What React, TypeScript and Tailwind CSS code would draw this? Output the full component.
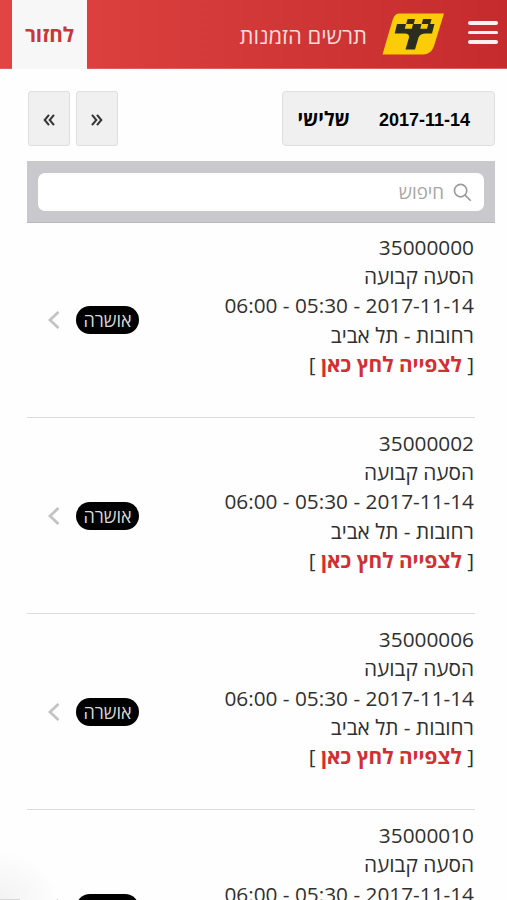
const orders = ['35000000', '35000002', '35000006', '35000010'];

function Logo() {
  return (
    <svg className="block h-[42px] w-[62px]" viewBox="0 0 62 42">
      <path d="M17 0.500H62L52 33Q49 41.500 41 41.500H0.500L10 9Q12 0.500 17 0.500Z" fill="#fdcc08" />
      <g fill="#2b2d1f">
        <path d="M25.500 6h7.500l-1.300 5h-7.500z" />
        <path d="M41 6H49.500l-1.300 5h-8.500z" />
        <path d="M15 11h9l-1.200 4.800h7l1.200-4.800h8.500l-1.200 4.800h6.700l1.200-4.800h6.300l-2.500 9.500H44Q38 20.500 36.500 24.500L33 36.500h-9.500L27 24.500Q27.500 20.500 22.500 20.500H12.700z" />
      </g>
    </svg>
  );
}

function Header() {
  return (
    <header className="flex h-[69px] items-start border-b border-[#d8605f] bg-linear-to-l from-[#c52b2c] to-[#e04443]">
      <button className="mr-[9px] mt-[21px] flex w-[30px] flex-col gap-[6px]">
        <span className="h-[3.500px] rounded-full bg-[#fff0f0]" />
        <span className="h-[3.500px] rounded-full bg-[#fff0f0]" />
        <span className="h-[3.500px] rounded-full bg-[#fff0f0]" />
      </button>
      <div className="mr-[24px] mt-[13px]"><Logo /></div>
      <h1 className="mr-[15px] mt-[20px] whitespace-nowrap text-[22px] leading-[30px] text-[#ffdcd8]">תרשים הזמנות</h1>
      <button className="mr-auto ml-3 h-[69px] w-[75px] bg-[#f7f7f7] text-[20.700px] font-bold text-[#c93639]">לחזור</button>
    </header>
  );
}

function OrderRow({ id }: { id: string }) {
  return (
    <li className="mr-[32px] ml-[27px] flex h-[196.100px] justify-between border-b border-[#dcdcdc] pt-[10.800px]">
      <div className="mr-px whitespace-nowrap text-[20.800px] leading-[29.300px] text-[#303030]">
        <p>{id}</p>
        <p>הסעה קבועה</p>
        <p><bdi>2017-11-14</bdi> - <bdi>05:30</bdi> - <bdi>06:00</bdi></p>
        <p>רחובות - תל אביב</p>
        <p>[ <a className="font-bold text-[#d22f32]">לצפייה לחץ כאן</a> ]</p>
      </div>
      <div className="mt-[73px] ml-[21px] flex h-7 items-center gap-[16px]">
        <span className="flex h-7 w-[63px] items-center justify-center rounded-full bg-black text-[18px] leading-none text-[#d8d8d8]">אושרה</span>
        <svg className="h-[18px] w-[12px]" viewBox="0 0 12 18" fill="none" stroke="#c3c3c3" strokeWidth="2.800">
          <path d="M10.500 1L2 9l8.500 8" />
        </svg>
      </div>
    </li>
  );
}

function StepButton({ path }: { path: string }) {
  return (
    <button className="flex h-[55px] w-[42px] items-center justify-center rounded-[3px] border border-[#dedede] bg-[#f0f0f0]">
      <svg className="mt-[2px] h-[12px] w-[12px]" viewBox="0 0 12 12" fill="none" stroke="#383838" strokeWidth="2.100">
        <path d={path} />
      </svg>
    </button>
  );
}

export default function App() {
  return (
    <div dir="rtl" className="relative h-[900px] w-[507px] overflow-hidden bg-[#fefefe] font-['Open_Sans','Noto_Sans',sans-serif]">
      <Header />
      <div className="mr-3 ml-[28px] mt-[22px] flex h-[55px] justify-between">
        <div className="flex w-[213px] items-center gap-[29px] rounded border border-[#dedede] bg-[#f0f0f0] pr-[24px] text-black">
          <bdi className="pt-[3px] font-['Liberation_Sans',sans-serif] text-[18px] font-bold">2017-11-14</bdi>
          <span className="whitespace-nowrap text-[19.500px] font-bold">שלישי</span>
        </div>
        <div className="flex gap-[6px]">
          <StepButton path="M1 0.800L5.300 6 1 11.200M6 0.800L10.300 6 6 11.200" />
          <StepButton path="M6 0.800L1.700 6 6 11.200M11 0.800L6.700 6 11 11.200" />
        </div>
      </div>
      <div className="mr-3 ml-[27px] mt-[15px] h-[61.500px] border-b border-[#b9b9bd] bg-[#c9c9cd] px-[11px] pt-[12px]">
        <div className="flex h-[38px] items-center rounded-[7px] bg-white pr-[12px] text-[18.700px] text-[#a6a6a6]">
          <svg className="h-[19px] w-[19px]" viewBox="0 0 20 20" fill="none" stroke="#9b9b9b" strokeWidth="1.800">
            <circle cx="8" cy="8" r="6.500" />
            <path d="M12.700 12.700l6 6" />
          </svg>
          <span className="mr-[9px]">חיפוש</span>
        </div>
      </div>
      <ul className="-mt-[0.500px]">
        {orders.map((id) => <OrderRow key={id} id={id} />)}
      </ul>
      <div className="pointer-events-none absolute bottom-0 left-0 h-[50px] w-[60px] bg-[radial-gradient(ellipse_at_bottom_left,#0000000c,transparent_70%)]" />
      <div className="pointer-events-none absolute bottom-0 left-0 h-px w-5 bg-[#d8d8d8]" />
    </div>
  );
}
